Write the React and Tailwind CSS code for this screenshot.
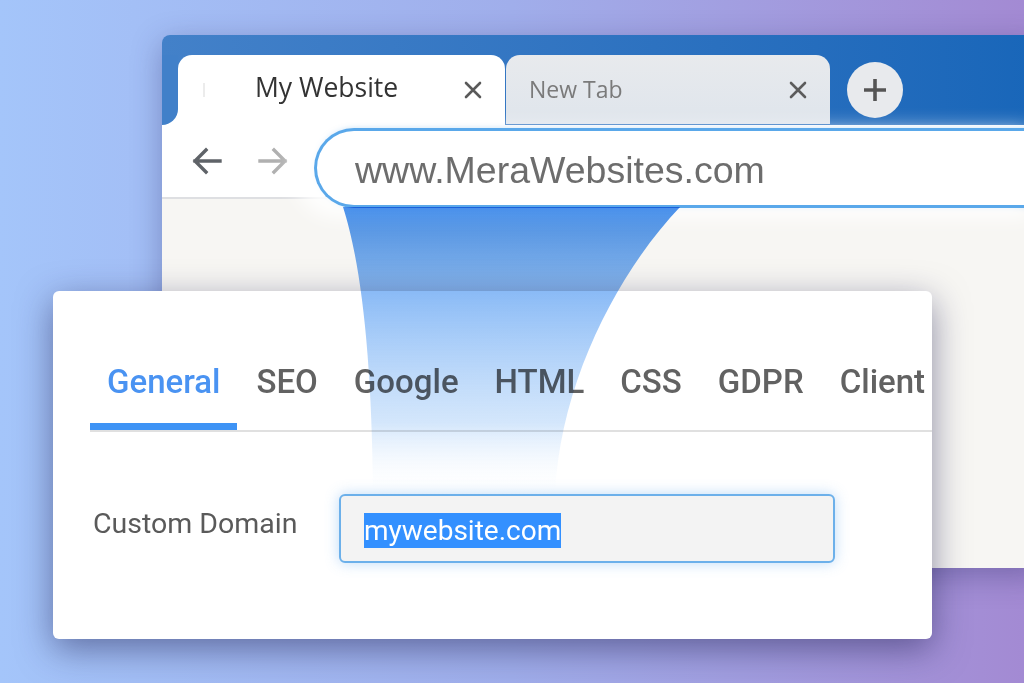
import React from "react";

const roboto = { fontFamily: "Roboto, 'Liberation Sans', sans-serif" };

function CloseIcon({ color = "#555" }) {
  return (
    <svg width="18" height="18" viewBox="0 0 18 18">
      <path d="M2 2 L16 16 M16 2 L2 16" stroke={color} strokeWidth="2.6" strokeLinecap="round" />
    </svg>
  );
}

function Arrow({ dir = "left", color }) {
  const d =
    dir === "left"
      ? "M28 14 H3 M14 3 L3 14 L14 25"
      : "M2 14 H27 M16 3 L27 14 L16 25";
  return (
    <svg width="30" height="28" viewBox="0 0 30 28">
      <path d={d} stroke={color} strokeWidth="3.4" fill="none" strokeLinecap="square" strokeLinejoin="miter" />
    </svg>
  );
}

const tabs = ["General", "SEO", "Google", "HTML", "CSS", "GDPR", "Client"];

export default function App() {
  return (
    <div className="relative w-[1024px] h-[683px] overflow-hidden bg-gradient-to-r from-[#a4c5fa] via-[#a0aeeb] to-[#a38ad3]">
      {/* Browser window */}
      <div className="absolute left-[162px] top-[35px] w-[880px] h-[533px] rounded-tl-[8px] overflow-hidden flex flex-col shadow-[0_8px_30px_rgba(40,40,100,0.35)]">
        {/* Tab strip */}
        <div className="h-[90px] flex items-end bg-gradient-to-r from-[#4381c9] to-[#1866b9] shrink-0">
          <div className="w-[16px] h-[70px] bg-white relative">
            <div className="absolute inset-0 bg-[#4180c9] rounded-br-[16px]" />
          </div>
          <div className="w-[327px] h-[70px] bg-white rounded-t-[14px] flex items-center relative">
            <div className="ml-[25px] w-[2px] h-[14px] bg-[#ececec]" />
            <span
              className="ml-[50px] -mt-[5px] text-[26.5px] text-[#333] leading-none"
              style={{ fontFamily: "'Open Sans', 'Noto Sans', sans-serif" }}
            >
              My Website
            </span>
            <div className="ml-auto mr-[23px] flex items-center">
              <CloseIcon color="#5a5a5a" />
            </div>
          </div>
          <div className="w-[324px] h-[69px] mb-[1px] ml-[1px] bg-gradient-to-b from-[#e8eaed] to-[#dfe5ec] rounded-t-[14px] flex items-center">
            <span
              className="ml-[23px] text-[23px] text-[#7a7a7a] leading-none"
              style={{ fontFamily: "'Open Sans', 'Noto Sans', sans-serif" }}
            >
              New Tab
            </span>
            <div className="ml-auto mr-[23px] flex items-center">
              <CloseIcon color="#5c5c5c" />
            </div>
          </div>
          <div className="ml-[17px] mb-[7px] w-[56px] h-[56px] rounded-full bg-[#e8eaed] flex items-center justify-center">
            <svg width="26" height="26" viewBox="0 0 26 26">
              <path d="M13 2 V24 M2 13 H24" stroke="#555" strokeWidth="3.6" />
            </svg>
          </div>
        </div>

        {/* Toolbar */}
        <div className="h-[74px] shrink-0 bg-white border-b-2 border-[#dedfe2] flex items-start relative z-10">
          <div className="h-[72px] flex items-center pl-[30px] gap-[36px]">
            <Arrow dir="left" color="#5f6368" />
            <Arrow dir="right" color="#b0b0b0" />
          </div>
          <div className="ml-[26px] mt-[3px] h-[80px] flex-1 rounded-l-full border-[3px] border-r-0 border-[#5aa8ea] bg-white flex items-center shadow-[-16px_6px_20px_4px_rgba(255,255,255,0.9),0_0_5px_rgba(90,168,234,0.5)]">
            <span
              className="ml-[38px] mt-[6px] text-[37.5px] text-[#6d6d6d] leading-none"
              style={{ fontFamily: "'Liberation Sans', Arial, sans-serif" }}
            >
              www.MeraWebsites.com
            </span>
          </div>
        </div>

        {/* Page content */}
        <div className="flex-1 bg-[#f7f6f3]" />
      </div>

      {/* Settings dialog */}
      <div
        className="absolute left-[53px] top-[291px] w-[879px] h-[348px] bg-white rounded-[6px] z-10 shadow-[0_10px_35px_rgba(30,30,80,0.5)]"
        style={roboto}
      >
        <div className="ml-[37px] mt-[71px] flex border-b-2 border-[#e0e0e0]">
          {tabs.map((t, i) => (
            <div
              key={t}
              className={
                "px-[17px] pb-[21px] border-b-[7px] text-[33px] leading-[40px] font-medium " +
                (i === 0 ? "border-[#3e93f5] text-[#4a93f2]" : "border-transparent text-[#626262]") +
                (i === 0 ? "" : " ml-[2px]")
              }
            >
              {t}
            </div>
          ))}
        </div>
        <div className="flex items-center pl-[40px] mt-[62px]">
          <div className="w-[246px] text-[28.5px] text-[#5a5a5a] leading-none -mt-[8px]">Custom Domain</div>
          <div className="w-[496px] h-[69px] rounded-[6px] border-2 border-[#6cb0ea] bg-[#f3f3f3] flex items-center pl-[23px] shadow-[0_0_14px_rgba(110,175,240,0.45)]">
            <span className="bg-[#3390ff] text-white text-[28px] leading-[35px] mt-[3px]">mywebsite.com</span>
          </div>
        </div>
      </div>

      {/* Funnel from address bar to domain field */}
      <svg className="absolute left-0 top-0 z-20 pointer-events-none mix-blend-multiply" width="1024" height="683" viewBox="0 0 1024 683">
        <defs>
          <linearGradient id="funnel" x1="0" y1="206" x2="0" y2="495" gradientUnits="userSpaceOnUse">
            <stop offset="0" stopColor="#4a92ee" stopOpacity="1" />
            <stop offset="0.3" stopColor="#6eaaf4" stopOpacity="0.8" />
            <stop offset="0.75" stopColor="#a8cef8" stopOpacity="0.5" />
            <stop offset="1" stopColor="#ffffff" stopOpacity="0" />
          </linearGradient>
        </defs>
        <path
          d="M343 207 C360 260 372 350 373 495 L555 495 C560 380 620 270 680 207 Z"
          fill="url(#funnel)"
        />
      </svg>
    </div>
  );
}
